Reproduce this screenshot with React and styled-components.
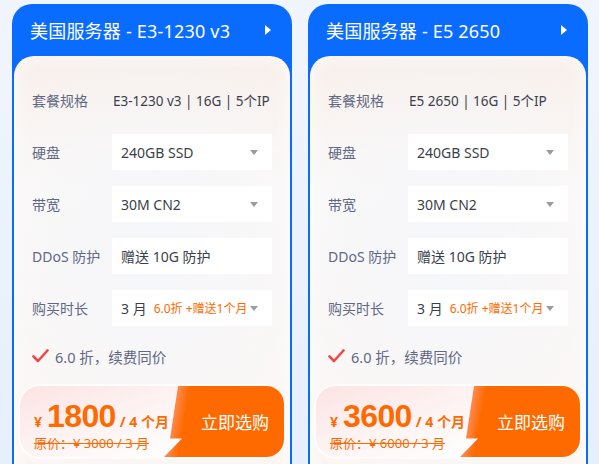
import React from "react";
import styled, { createGlobalStyle } from "styled-components";

const BLUE = "#0a6bff";
const ORANGE = "#ff6a00";

const GlobalStyle = createGlobalStyle`
  html, body {
    margin: 0;
    height: 100%;
    overflow: hidden;
  }
  body {
    background: linear-gradient(180deg, #f1f5fd 0%, #e6effc 100%);
    font-family: "Noto Sans", "Noto Sans CJK SC", sans-serif;
  }
`;

const plans = [
  {
    title: "美国服务器 - E3-1230 v3",
    spec: "E3-1230 v3 | 16G | 5个IP",
    price: "1800",
    original: "3000",
  },
  {
    title: "美国服务器 - E5 2650",
    spec: "E5 2650 | 16G | 5个IP",
    price: "3600",
    original: "6000",
  },
];

const Page = styled.div`
  display: flex;
  gap: 16px;
  padding: 4px 0 0 12px;
`;

const Card = styled.div`
  width: 280px;
  height: 480px;
  box-sizing: border-box;
  background: ${BLUE};
  border-radius: 20px 20px 0 0;
  padding: 0 2px;
  display: flex;
  flex-direction: column;
`;

const Header = styled.div`
  height: 52px;
  display: flex;
  align-items: center;
  justify-content: space-between;
  padding: 0 19px 0 16px;
  color: #fff;
  font-size: 18px;
  letter-spacing: 0.2px;
`;

const Arrow = styled.span`
  width: 0;
  height: 0;
  border-top: 5px solid transparent;
  border-bottom: 5px solid transparent;
  border-left: 6px solid #fff;
`;

const Panel = styled.div`
  flex: 1;
  border-radius: 20px 20px 0 0;
  background:
    radial-gradient(ellipse 70% 55% at 50% 45%, rgba(244, 246, 251, 0.9) 0%, rgba(255, 255, 255, 0) 100%),
    linear-gradient(180deg, #f8efea 0%, #fcf9f7 30%, #fbf6f3 100%);
  box-shadow: inset 0 0 18px rgba(255, 255, 255, 0.9);
  padding: 26px 4px 0;
  display: flex;
  flex-direction: column;
`;

const Rows = styled.div`
  display: flex;
  flex-direction: column;
  gap: 16px;
  padding: 0 14px;
`;

const Row = styled.div`
  display: flex;
  align-items: center;
  height: 36px;
`;

const Label = styled.div`
  width: 80px;
  font-size: 14px;
  color: #5f6985;
`;

const Value = styled.div`
  width: 160px;
  height: 36px;
  box-sizing: border-box;
  display: flex;
  align-items: center;
  justify-content: space-between;
  padding: ${(p) => (p.$plain ? "0 0 0 1px" : "0 14px 0 9px")};
  background: ${(p) => (p.$plain ? "transparent" : "#fff")};
  font-size: ${(p) => (p.$plain ? "13.5px" : "14px")};
  color: #3b3f4a;
  white-space: nowrap;
`;

const Caret = styled.span`
  width: 0;
  height: 0;
  border-left: 4.5px solid transparent;
  border-right: 4.5px solid transparent;
  border-top: 5px solid #9a9ca3;
  flex-shrink: 0;
`;

const Promo = styled.span`
  color: ${ORANGE};
  font-size: 12px;
  margin-left: 7px;
  flex: 1;
`;

const Note = styled.div`
  display: flex;
  align-items: center;
  gap: 6px;
  margin: 20px 0 0 14px;
  height: 20px;
  font-size: 14.5px;
  color: #5f6985;
`;

const PriceBox = styled.div`
  margin-top: 18px;
  padding: 2px;
  border-radius: 22px;
  background: rgba(255, 255, 255, 0.7);
  display: flex;
  height: 71px;
`;

const PriceInfo = styled.div`
  flex: 1;
  margin-right: -14px;
  border-radius: 20px 0 0 20px;
  background: linear-gradient(160deg, #fde3e3 0%, #fdf1f1 45%, #ffffff 100%);
  padding: 14px 0 0 14px;
  color: ${ORANGE};
  display: flex;
  flex-direction: column;
`;

const PriceLine = styled.div`
  display: flex;
  align-items: baseline;
  font-weight: 700;
  white-space: nowrap;
  line-height: 1;
  height: 30px;
`;

const Yen = styled.span`
  font-size: 14px;
  margin-right: 5px;
`;

const Amount = styled.span`
  font-family: "Liberation Sans", Arial, sans-serif;
  font-size: 32px;
  letter-spacing: -0.6px;
`;

const Period = styled.span`
  font-size: 14px;
  margin-left: 4px;
`;

const Original = styled.div`
  font-size: 13px;
  line-height: 16px;
  text-decoration: line-through;
  margin-top: 5px;
`;

const BuyButton = styled.button`
  width: 120px;
  border: none;
  border-radius: 0 18px 18px 0;
  clip-path: polygon(14px 0, 100% 0, 100% 100%, 0 100%, 18px 74%, 6px 74%);
  background: linear-gradient(100deg, #ffa27a 0%, #ff8a4f 14px, ${ORANGE} 26px, ${ORANGE} 100%);
  color: #fff;
  font-family: inherit;
  font-size: 17px;
  padding: 0 0 0 22px;
  cursor: pointer;
`;

const Check = () => (
  <svg width="17" height="14" viewBox="0 0 17 14">
    <path d="M1.5 7.5 L6 12 L15.5 1.5" fill="none" stroke="#f04848" strokeWidth="2.6" strokeLinecap="round" strokeLinejoin="round" />
  </svg>
);

const PlanCard = ({ plan }) => (
  <Card>
    <Header>
      <span>{plan.title}</span>
      <Arrow />
    </Header>
    <Panel>
      <Rows>
        <Row>
          <Label>套餐规格</Label>
          <Value $plain>{plan.spec}</Value>
        </Row>
        <Row>
          <Label>硬盘</Label>
          <Value>
            240GB SSD
            <Caret />
          </Value>
        </Row>
        <Row>
          <Label>带宽</Label>
          <Value>
            30M CN2
            <Caret />
          </Value>
        </Row>
        <Row>
          <Label>DDoS 防护</Label>
          <Value>赠送 10G 防护</Value>
        </Row>
        <Row>
          <Label>购买时长</Label>
          <Value>
            3 月<Promo>6.0折 +赠送1个月</Promo>
            <Caret />
          </Value>
        </Row>
      </Rows>
      <Note>
        <Check />
        6.0 折，续费同价
      </Note>
      <PriceBox>
        <PriceInfo>
          <PriceLine>
            <Yen>¥</Yen>
            <Amount>{plan.price}</Amount>
            <Period>/ 4 个月</Period>
          </PriceLine>
          <Original>原价：¥ {plan.original} / 3 月</Original>
        </PriceInfo>
        <BuyButton>立即选购</BuyButton>
      </PriceBox>
    </Panel>
  </Card>
);

export default function App() {
  return (
    <>
      <GlobalStyle />
      <Page>
        {plans.map((plan) => (
          <PlanCard key={plan.title} plan={plan} />
        ))}
      </Page>
    </>
  );
}
